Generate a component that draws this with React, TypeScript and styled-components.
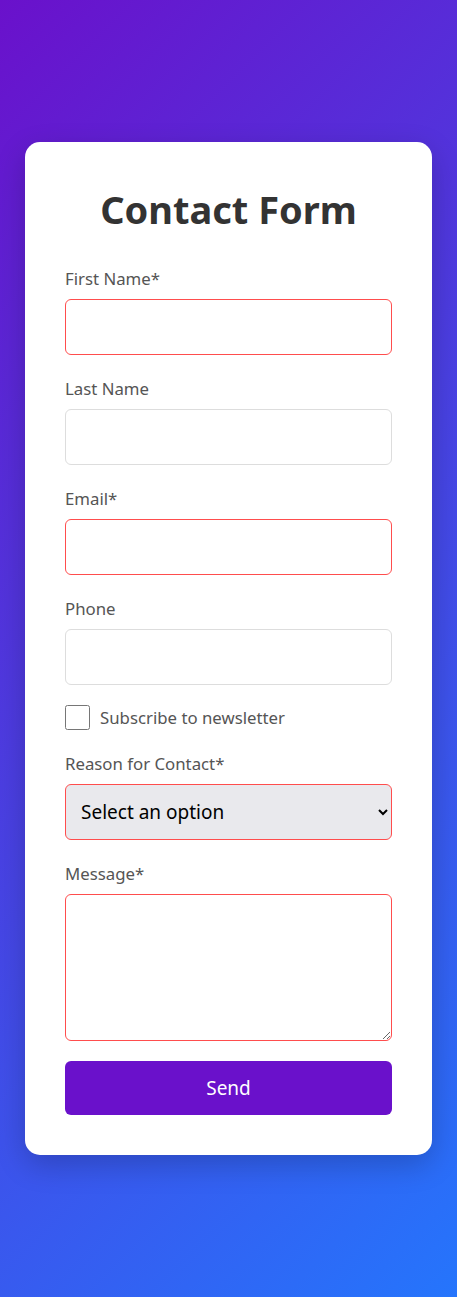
import styled, { createGlobalStyle } from 'styled-components';

const GlobalStyle = createGlobalStyle`
    * { box-sizing: border-box; }
    html, body {
        margin: 0;
        padding: 0;
    }
    body {
        font-family: "Noto Sans", "Open Sans", sans-serif;
        background: linear-gradient(135deg, #6a11cb 0%, #2575fc 100%);
        min-height: 100vh;
    }
`;

const Page = styled.div`
    min-height: 100vh;
    display: flex;
    align-items: center;
    justify-content: center;
`;

const Card = styled.form`
    width: 407px;
    background: #fff;
    border-radius: 15px;
    padding: 40px;
    box-shadow: 0 10px 30px rgba(0, 0, 0, 0.2);
`;

const Title = styled.h1`
    margin: 0 0 31px;
    text-align: center;
    font-size: 38px;
    line-height: 54px;
    font-weight: 700;
    color: #333;
`;

const Group = styled.div`
    margin-bottom: 22px;
`;

const Label = styled.label`
    display: block;
    font-size: 16.8px;
    line-height: 24px;
    color: #555;
    margin-bottom: 8px;
`;

const Field = styled.input<{ $required?: boolean }>`
    display: block;
    width: 100%;
    height: 56px;
    padding: 0 15px;
    font: inherit;
    font-size: 18px;
    border: 1px solid ${p => (p.$required ? '#ff4d4d' : '#ddd')};
    border-radius: 6px;
    outline: none;
`;

const Select = styled.select`
    display: block;
    width: 100%;
    height: 56px;
    padding: 0 10px 0 11px;
    font: inherit;
    font-size: 19px;
    color: #000;
    background-color: #e9e9ed;
    border: 1px solid #ff4d4d;
    border-radius: 6px;
    outline: none;
`;

const TextArea = styled.textarea`
    display: block;
    width: 100%;
    height: 147px;
    padding: 15px;
    font: inherit;
    font-size: 18px;
    border: 1px solid #ff4d4d;
    border-radius: 6px;
    outline: none;
    resize: both;
`;

const CheckRow = styled.label`
    display: flex;
    align-items: center;
    gap: 10px;
    height: 25px;
    margin: -2px 0 22px;
    font-size: 16.8px;
    color: #555;
`;

const CheckBox = styled.input`
    width: 25px;
    height: 25px;
    margin: 0;
`;

const SendButton = styled.button`
    display: block;
    width: 100%;
    height: 54px;
    margin-top: 20px;
    border: none;
    border-radius: 6px;
    background: #6a11cb;
    color: #fff;
    font: inherit;
    font-size: 19px;
    cursor: pointer;
`;

const App = () => {
    return (
        <>
            <GlobalStyle />
            <Page>
                <Card onSubmit={e => e.preventDefault()}>
                    <Title>Contact Form</Title>
                    <Group>
                        <Label>First Name*</Label>
                        <Field $required />
                    </Group>
                    <Group>
                        <Label>Last Name</Label>
                        <Field />
                    </Group>
                    <Group>
                        <Label>Email*</Label>
                        <Field $required type="email" />
                    </Group>
                    <Group>
                        <Label>Phone</Label>
                        <Field type="tel" />
                    </Group>
                    <CheckRow>
                        <CheckBox type="checkbox" />
                        Subscribe to newsletter
                    </CheckRow>
                    <Group>
                        <Label>Reason for Contact*</Label>
                        <Select defaultValue="">
                            <option value="">Select an option</option>
                            <option value="support">Support</option>
                            <option value="sales">Sales</option>
                            <option value="other">Other</option>
                        </Select>
                    </Group>
                    <Label>Message*</Label>
                    <TextArea />
                    <SendButton type="submit">Send</SendButton>
                </Card>
            </Page>
        </>
    );
};

export default App;
